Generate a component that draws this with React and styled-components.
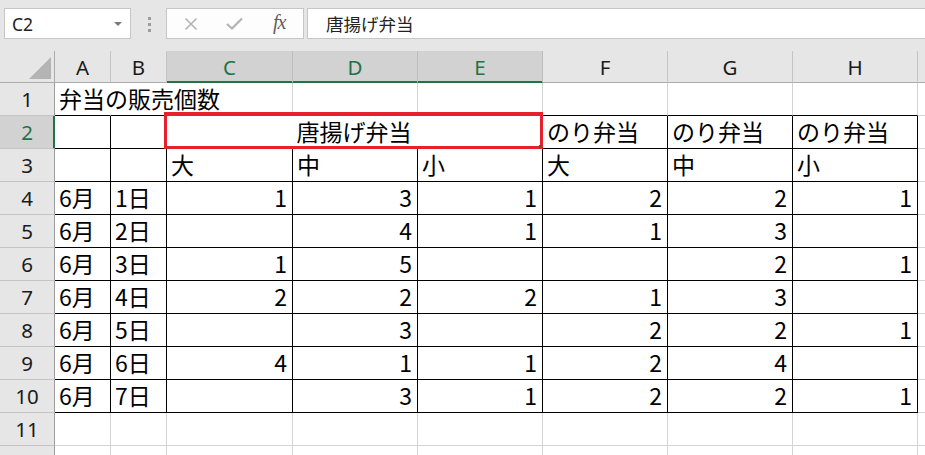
import styled, { createGlobalStyle } from "styled-components"

const GRID = '#d4d4d4'
const INK = '#000'
const GREEN = '#217346'
const HEAD_LINE = '#ababab'
const UI_FONT = '"Noto Sans", "Noto Sans CJK JP", sans-serif'
const JP_FONT = '"Noto Sans CJK JP", "Noto Sans", sans-serif'

const Global = createGlobalStyle`
  html, body { margin: 0; padding: 0; background: #fff; overflow: hidden; }
`

const Window = styled.div`
  width: 925px;
  height: 455px;
  overflow: hidden;
  background: #fff;
  font-family: ${JP_FONT};
`

const Toolbar = styled.div`
  height: 51px;
  box-sizing: border-box;
  background: #e6e6e6;
  display: flex;
  align-items: flex-start;
  padding: 8px 0 0 4px;
`

const NameBox = styled.div`
  width: 127px;
  height: 31px;
  box-sizing: border-box;
  border: 1px solid #c6c6c6;
  background: #fff;
  display: flex;
  align-items: center;
  justify-content: space-between;
  padding: 0 8px 0 7px;
  font: 17.5px ${UI_FONT};
  color: #222;
`

const Caret = styled.span`
  width: 0;
  height: 0;
  border-left: 4px solid transparent;
  border-right: 4px solid transparent;
  border-top: 4px solid #7a7a7a;
`

const Grip = styled.div`
  display: flex;
  flex-direction: column;
  gap: 3px;
  margin: 9px 15px 0 17px;
`

const Dot = styled.span`
  width: 3px;
  height: 3px;
  background: #9c9c9c;
`

const FxBox = styled.div`
  width: 138px;
  height: 31px;
  box-sizing: border-box;
  border: 1px solid #c6c6c6;
  background: #fdfdfd;
  display: flex;
  align-items: center;
  padding: 0 0 0 17px;
`

const IconSlot = styled.span`
  display: inline-flex;
  align-items: center;
  justify-content: center;
  width: ${p => p.$w}px;
  margin-left: ${p => p.$gap || 0}px;
`

const Fx = styled.span`
  font: italic 20px "Liberation Serif", serif;
  color: #5f5f5f;
  letter-spacing: -1px;
  margin-left: 30px;
  margin-top: -2px;
`

const FormulaBar = styled.div`
  flex: 1;
  height: 31px;
  box-sizing: border-box;
  margin-left: 3px;
  border: 1px solid #c6c6c6;
  border-right: none;
  background: #fff;
  display: flex;
  align-items: center;
  padding-left: 18px;
  font: 17.5px ${JP_FONT};
  color: #222;
`

const Sheet = styled.div`
  display: grid;
  grid-template-columns: 55px 56px 56px 126px repeat(5, 125px) 60px;
  grid-template-rows: 32px;
  grid-auto-rows: 33px;
`

const Corner = styled.div`
  box-sizing: border-box;
  background: #e6e6e6;
  border-right: 1px solid ${HEAD_LINE};
  border-bottom: 1px solid ${HEAD_LINE};
  display: flex;
  align-items: flex-end;
  justify-content: flex-end;
  padding: 0 3px 3px 0;
`

const Triangle = styled.span`
  width: 0;
  height: 0;
  border-left: 22px solid transparent;
  border-bottom: 22px solid #b4b4b4;
`

const ColHead = styled.div`
  box-sizing: border-box;
  background: ${p => (p.$sel ? '#d2d2d2' : '#e6e6e6')};
  color: ${p => (p.$sel ? GREEN : '#1a1a1a')};
  border-right: 1px solid ${p => (p.$sel ? '#bdbdbd' : '#c4c4c4')};
  border-bottom: 1px solid ${p => (p.$sel ? GREEN : HEAD_LINE)};
  box-shadow: ${p => (p.$sel ? `inset 0 -1px 0 ${GREEN}` : 'none')};
  display: flex;
  align-items: center;
  justify-content: center;
  font: 20.5px ${UI_FONT};
  padding-top: 1px;
`

const RowHead = styled.div`
  box-sizing: border-box;
  background: ${p => (p.$sel ? '#d2d2d2' : '#e6e6e6')};
  color: ${p => (p.$sel ? GREEN : '#1a1a1a')};
  border-right: 1px solid ${p => (p.$sel ? GREEN : '#9e9e9e')};
  box-shadow: ${p => (p.$sel ? `inset -1px 0 0 ${GREEN}` : 'none')};
  border-bottom: 1px solid #c4c4c4;
  display: flex;
  align-items: center;
  justify-content: center;
  font: 20.5px ${UI_FONT};
`

const Cell = styled.div`
  position: relative;
  box-sizing: border-box;
  min-width: 0;
  grid-column: span ${p => p.$span || 1};
  border-right: 1px solid ${p => p.$right};
  border-bottom: 1px solid ${p => p.$bottom};
  display: flex;
  align-items: flex-end;
  justify-content: ${p =>
    p.$align === 'right' ? 'flex-end'
      : p.$align === 'center' ? 'center'
        : 'flex-start'};
  padding: 0 5px 3px 4px;
  font: 23px/28px ${JP_FONT};
  color: #000;
  white-space: nowrap;
`

const Selection = styled.span`
  position: absolute;
  left: -3px;
  top: -4px;
  right: -1px;
  bottom: -1px;
  border: 3px solid #e5222b;
  border-top-width: 4px;
  pointer-events: none;
`

const FillHandle = styled.span`
  position: absolute;
  right: -2px;
  bottom: -2px;
  width: 3px;
  height: 3px;
  background: ${GREEN};
`

const columns = [
  { key: 'A' }, { key: 'B' }, { key: 'C', sel: true }, { key: 'D', sel: true },
  { key: 'E', sel: true }, { key: 'F' }, { key: 'G' }, { key: 'H' }, { key: '' },
]

const body = [
  ['6月', '1日', 1, 3, 1, 2, 2, 1],
  ['6月', '2日', '', 4, 1, 1, 3, ''],
  ['6月', '3日', 1, 5, '', '', 2, 1],
  ['6月', '4日', 2, 2, 2, 1, 3, ''],
  ['6月', '5日', '', 3, '', 2, 2, 1],
  ['6月', '6日', 4, 1, 1, 2, 4, ''],
  ['6月', '7日', '', 3, 1, 2, 2, 1],
]

const rows = [
  ['弁当の販売個数', '', '', '', '', '', '', ''],
  ['', '', '唐揚げ弁当', null, null, 'のり弁当', 'のり弁当', 'のり弁当'],
  ['', '', '大', '中', '小', '大', '中', '小'],
  ...body,
  ['', '', '', '', '', '', '', ''],
  ['', '', '', '', '', '', '', ''],
]

function borderRight(r, c) {
  if (c <= 7 && r >= 2 && r <= 10) return INK
  if (r === 1 && c <= 1) return 'transparent'
  return GRID
}

function borderBottom(r, c) {
  if (c <= 7 && r >= 1 && r <= 10) return INK
  return GRID
}

function CrossIcon() {
  return (
    <svg width="14" height="14" viewBox="0 0 14 14">
      <path d="M1.5 1.5 L12.5 12.5 M12.5 1.5 L1.5 12.5" stroke="#b3b3b3" strokeWidth="1.6" fill="none" />
    </svg>
  )
}

function CheckIcon() {
  return (
    <svg width="17" height="13" viewBox="0 0 17 13">
      <path d="M1 7 L6 11.5 L16 1.5" stroke="#b3b3b3" strokeWidth="2.2" fill="none" />
    </svg>
  )
}

function SheetRow({ r, cells }) {
  const out = [
    <RowHead key="h" $sel={r === 2}>{r}</RowHead>,
  ]
  cells.forEach((v, c) => {
    if (v === null) return
    const merged = r === 2 && c === 2
    const numeric = typeof v === 'number'
    out.push(
      <Cell
        key={c}
        $span={merged ? 3 : 1}
        $right={borderRight(r, merged ? 4 : c)}
        $bottom={borderBottom(r, c)}
        $align={merged ? 'center' : numeric ? 'right' : 'left'}
      >
        {v}
        {merged && (
          <Selection>
            <FillHandle />
          </Selection>
        )}
      </Cell>
    )
  })
  out.push(<Cell key="i" $right={GRID} $bottom={GRID} />)
  return out
}

export default function App() {
  return (
    <Window>
      <Global />
      <Toolbar>
        <NameBox>
          C2
          <Caret />
        </NameBox>
        <Grip>
          <Dot />
          <Dot />
          <Dot />
        </Grip>
        <FxBox>
          <IconSlot $w={14}><CrossIcon /></IconSlot>
          <IconSlot $w={17} $gap={28}><CheckIcon /></IconSlot>
          <Fx>fx</Fx>
        </FxBox>
        <FormulaBar>唐揚げ弁当</FormulaBar>
      </Toolbar>
      <Sheet>
        <Corner>
          <Triangle />
        </Corner>
        {columns.map(col => (
          <ColHead key={col.key || 'I'} $sel={col.sel}>{col.key}</ColHead>
        ))}
        {rows.map((cells, i) => (
          <SheetRow key={i} r={i + 1} cells={cells} />
        ))}
      </Sheet>
    </Window>
  )
}
